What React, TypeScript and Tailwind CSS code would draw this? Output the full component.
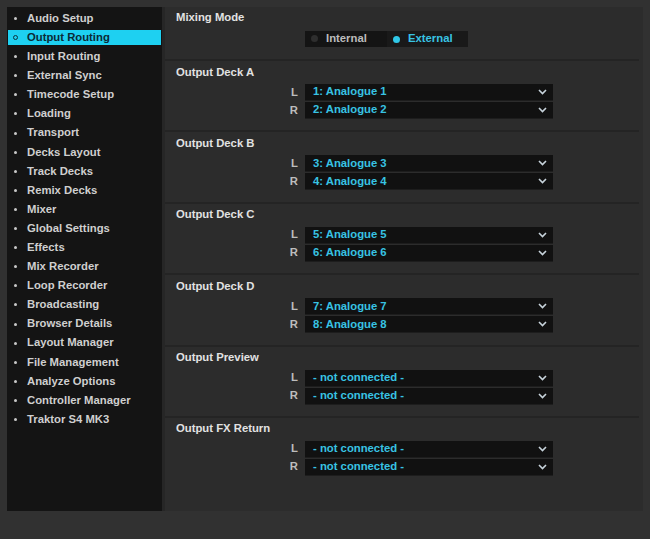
import React from "react";

const sidebarItems = [
  "Audio Setup",
  "Output Routing",
  "Input Routing",
  "External Sync",
  "Timecode Setup",
  "Loading",
  "Transport",
  "Decks Layout",
  "Track Decks",
  "Remix Decks",
  "Mixer",
  "Global Settings",
  "Effects",
  "Mix Recorder",
  "Loop Recorder",
  "Broadcasting",
  "Browser Details",
  "Layout Manager",
  "File Management",
  "Analyze Options",
  "Controller Manager",
  "Traktor S4 MK3",
];

const outputs = [
  { title: "Output Deck A", l: "1: Analogue 1", r: "2: Analogue 2" },
  { title: "Output Deck B", l: "3: Analogue 3", r: "4: Analogue 4" },
  { title: "Output Deck C", l: "5: Analogue 5", r: "6: Analogue 6" },
  { title: "Output Deck D", l: "7: Analogue 7", r: "8: Analogue 8" },
  { title: "Output Preview", l: "- not connected -", r: "- not connected -" },
  { title: "Output FX Return", l: "- not connected -", r: "- not connected -" },
];

function Chevron() {
  return (
    <svg width="9" height="6" viewBox="0 0 9 6" className="shrink-0">
      <path d="M1 1 L4.5 4.5 L8 1" fill="none" stroke="#c8d4dc" strokeWidth="1.6" />
    </svg>
  );
}

function Dropdown({ side, value }: { side: string; value: string }) {
  return (
    <div className="flex items-center h-[16px]">
      <span className="w-[129px] pr-[7px] text-right text-[11.3px] font-bold text-[#bdbdbd]">{side}</span>
      <div className="w-[248px] h-[16px] bg-[#111111] flex items-center justify-between pl-[8px] pr-[6px] shadow-[0_1px_0_#1d1d1d]">
        <span className="text-[11.3px] font-bold text-[#38c3e3] leading-none">{value}</span>
        <Chevron />
      </div>
    </div>
  );
}

export default function App() {
  return (
    <div
      className="w-[650px] h-[539px] bg-[#313131] flex items-start p-[7px] overflow-hidden"
      style={{ fontFamily: '"Liberation Sans", Arial, sans-serif' }}
    >
      {/* Sidebar */}
      <div className="w-[155px] h-[504px] bg-[#141414] pt-[4px] flex flex-col gap-[4.1px] shrink-0">
        {sidebarItems.map((item, i) => {
          const active = i === 1;
          return (
            <div
              key={item}
              className={`h-[15px] flex items-center pl-[5px] mx-[1px] ${active ? "bg-[#1ed0f1]" : ""}`}
            >
              {active ? (
                <span className="w-[5px] h-[5px] rounded-full border border-[#0c3340] mr-[9px]" />
              ) : (
                <span className="w-[3px] h-[3px] rounded-full bg-[#c8c8c8] ml-[1px] mr-[10px]" />
              )}
              <span className={`text-[11.3px] font-bold leading-none ${active ? "text-[#0b2a36]" : "text-[#cfcfcf]"}`}>
                {item}
              </span>
            </div>
          );
        })}
      </div>

      {/* Main panel */}
      <div className="w-[481px] h-[504px] bg-[#2c2c2c] border-l-[3px] border-[#262626] flex flex-col">
        <div className="h-[52px] pl-[11px] pt-[3px]">
          <div className="h-[14px] flex items-center text-[11.3px] font-bold text-[#e2e2e2]">Mixing Mode</div>
          <div className="mt-[7px] ml-[129px] w-[163px] h-[16px] bg-[#141414] flex items-center">
            <div className="w-[82px] flex items-center pl-[6px]">
              <span className="w-[7px] h-[7px] rounded-full bg-[#2e2e2e] mr-[8px]" />
              <span className="text-[11.3px] font-bold text-[#bcbcbc] leading-none">Internal</span>
            </div>
            <div className="flex-1 h-full bg-[#191919] flex items-center pl-[6px]">
              <span className="w-[7px] h-[7px] rounded-full bg-[#30c8e8] mr-[8px]" />
              <span className="text-[11.3px] font-bold text-[#38c3e3] leading-none">External</span>
            </div>
          </div>
        </div>

        {outputs.map((o) => (
          <div key={o.title} className="h-[71.4px] border-t-2 border-[#242424] pl-[11px] pt-[4px] mr-[4px]">
            <div className="h-[14px] flex items-center text-[11.3px] font-bold text-[#e2e2e2]">{o.title}</div>
            <div className="mt-[5px] flex flex-col gap-[2px]">
              <Dropdown side="L" value={o.l} />
              <Dropdown side="R" value={o.r} />
            </div>
          </div>
        ))}
      </div>
    </div>
  );
}
